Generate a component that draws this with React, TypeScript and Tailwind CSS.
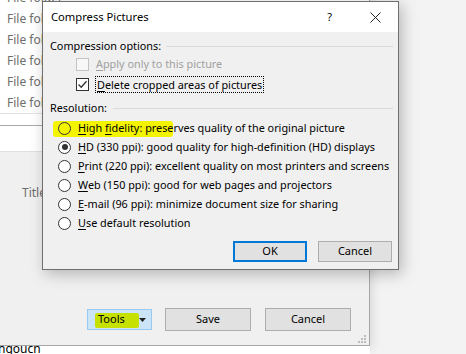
import React from "react";

type RadioProps = { checked?: boolean; clear?: boolean };

const Radio: React.FC<RadioProps> = ({ checked, clear }) => (
  <span className={`w-[13px] h-[13px] shrink-0 rounded-full border border-[#333] flex items-center justify-center ${clear ? "bg-transparent" : "bg-white"}`}>
    {checked && <span className="w-[6px] h-[6px] rounded-full bg-[#333]" />}
  </span>
);

const Check: React.FC<{ checked?: boolean; disabled?: boolean }> = ({ checked, disabled }) => (
  <span className={`w-[13px] h-[13px] shrink-0 border flex items-center justify-center ${disabled ? "border-[#c4c4c4] bg-[#f7f7f7]" : "border-[#333] bg-white"}`}>
    {checked && (
      <svg width="11" height="11" viewBox="0 0 11 11">
        <path d="M1.5 5.5 L4.2 8.2 L9.5 2.2" fill="none" stroke="#333" strokeWidth="1.3" />
      </svg>
    )}
  </span>
);

const rows = [
  { key: "H", rest: "igh ", key2: "f", rest2: "idelity: preserves quality of the original picture", hl: true },
  { key: "H", rest: "D (330 ppi): good quality for high-definition (HD) displays", checked: true },
  { key: "P", rest: "rint (220 ppi): excellent quality on most printers and screens" },
  { key: "W", rest: "eb (150 ppi): good for web pages and projectors" },
  { key: "E", rest: "-mail (96 ppi): minimize document size for sharing" },
  { key: "U", rest: "se default resolution" },
];

export default function App() {
  return (
    <div className="relative w-[466px] h-[354px] overflow-hidden bg-[#f3f3f3] font-['Noto_Sans',sans-serif] text-[10.85px] text-black">
      {/* save dialog behind */}
      <div className="absolute left-0 top-[-13px] w-[370px] h-[359px] flex flex-col bg-[#f0f0f0] border-r border-b border-[#a6a6a6] shadow-[2px_2px_10px_rgba(0,0,0,0.12)]">
        <div className="bg-white border-b border-[#e3e3e3]">
          {[0, 1, 2, 3, 4, 5].map((i) => (
            <div key={i} className="h-[21px] flex items-center pl-[7px] text-[12px] text-[#6d6d6d]">File folder</div>
          ))}
        </div>
        <div className="bg-white h-[12px] border-b border-[#a9a9a9]" />
        <div className="bg-white h-[26px] border-b border-[#e0e0e0]" />
        <div className="flex-1 flex flex-col relative">
          <div className="mt-[33px] h-[16px] pl-[22px] flex items-center text-[12px] text-[#6d6d6d]">Title</div>
          <div className="flex-1" />
          <div className="h-[23px] flex items-center pl-[87px] mb-[14px]">
            <div className="relative w-[65px] h-[21px] bg-[#cce4f7] border border-[#99c9ef] flex items-center">
              <span className="absolute left-[7px] top-[3px] w-[44px] h-[15px] bg-[#c6e000] rounded-[2px]" />
              <span className="relative ml-[10px] text-[11px]">Tools</span>
              <svg className="absolute right-[5px] top-[8px]" width="7" height="4" viewBox="0 0 7 4">
                <path d="M0 0 H7 L3.5 4 Z" fill="#222" />
              </svg>
            </div>
            <div className="ml-[13px] w-[86px] h-[23px] bg-[#e1e1e1] border border-[#adadad] flex items-center justify-center text-[11px]">Save</div>
            <div className="ml-[14px] w-[86px] h-[23px] bg-[#e1e1e1] border border-[#adadad] flex items-center justify-center text-[11px]">Cancel</div>
          </div>
          <svg className="absolute right-[3px] bottom-[2px]" width="8" height="8" viewBox="0 0 8 8">
            <rect x="6" y="0" width="2" height="2" fill="#bdbdbd" />
            <rect x="3" y="3" width="2" height="2" fill="#bdbdbd" />
            <rect x="6" y="3" width="2" height="2" fill="#bdbdbd" />
            <rect x="0" y="6" width="2" height="2" fill="#bdbdbd" />
            <rect x="3" y="6" width="2" height="2" fill="#bdbdbd" />
            <rect x="6" y="6" width="2" height="2" fill="#bdbdbd" />
          </svg>
        </div>
      </div>

      {/* text below the save dialog */}
      <div className="absolute left-0 top-[346px] w-[370px] h-[8px] bg-white overflow-hidden">
        <div className="-mt-[5px] -ml-[2px] leading-[16px] text-[12px]">ngouch</div>
      </div>

      {/* compress pictures dialog */}
      <div className="absolute left-[42px] top-[1px] w-[357px] h-[269px] flex flex-col border border-[#6f6f6f] bg-[#f0f0f0] shadow-[3px_4px_14px_rgba(0,0,0,0.25)]">
        <div className="h-[30px] bg-white flex items-center pl-[8px] pr-[17px]">
          <span className="flex-1 text-[11.2px]">Compress Pictures</span>
          <span className="mr-[38px] text-[11px]">?</span>
          <svg width="11" height="11" viewBox="0 0 11 11">
            <path d="M0.5 0.5 L10.5 10.5 M10.5 0.5 L0.5 10.5" stroke="#222" strokeWidth="1" />
          </svg>
        </div>
        <div className="flex-1 flex flex-col pt-[6px] pl-[7px] pr-[5px]">
          <div className="h-[16px] flex items-center">
            <span>Compression options:</span>
            <span className="flex-1 h-px bg-[#dadada] ml-[5px]" />
          </div>
          <div className="h-[20px] flex items-center pl-[26px] text-[#a0a0a0]">
            <Check disabled />
            <span className="ml-[7px]"><u className="underline-offset-[2px]">A</u>pply only to this picture</span>
          </div>
          <div className="h-[20px] flex items-center pl-[26px]">
            <Check checked />
            <span className="ml-[6px] px-[1px] border border-dotted border-black leading-[15px]"><u className="underline-offset-[2px]">D</u>elete cropped areas of pictures</span>
          </div>
          <div className="mt-[6px] h-[16px] flex items-center">
            <span>Resolution:</span>
            <span className="flex-1 h-px bg-[#dadada] ml-[6px]" />
          </div>
          <div className="mt-[3px] flex flex-col">
            {rows.map((r, i) => (
              <div key={i} className="relative h-[19px] flex items-center pl-[8px]">
                {r.hl && <span className="absolute left-[3px] top-[2px] w-[120px] h-[16px] bg-[#f4f400] rounded-[3px]" />}
                <span className="relative flex items-center">
                  <Radio checked={r.checked} clear={r.hl} />
                  <span className="ml-[7px] whitespace-nowrap">
                    <u className="underline-offset-[2px]">{r.key}</u>
                    {r.rest}
                    {r.key2 && <u className="underline-offset-[2px]">{r.key2}</u>}
                    {r.rest2}
                  </span>
                </span>
              </div>
            ))}
          </div>
          <div className="mt-[8px] flex justify-end gap-[11px] pr-[1px]">
            <div className="w-[74px] h-[21px] bg-[#e1e1e1] border-2 border-[#0078d7] flex items-center justify-center text-[11px]">OK</div>
            <div className="w-[74px] h-[21px] bg-[#e1e1e1] border border-[#adadad] flex items-center justify-center text-[11px]">Cancel</div>
          </div>
        </div>
      </div>
    </div>
  );
}
